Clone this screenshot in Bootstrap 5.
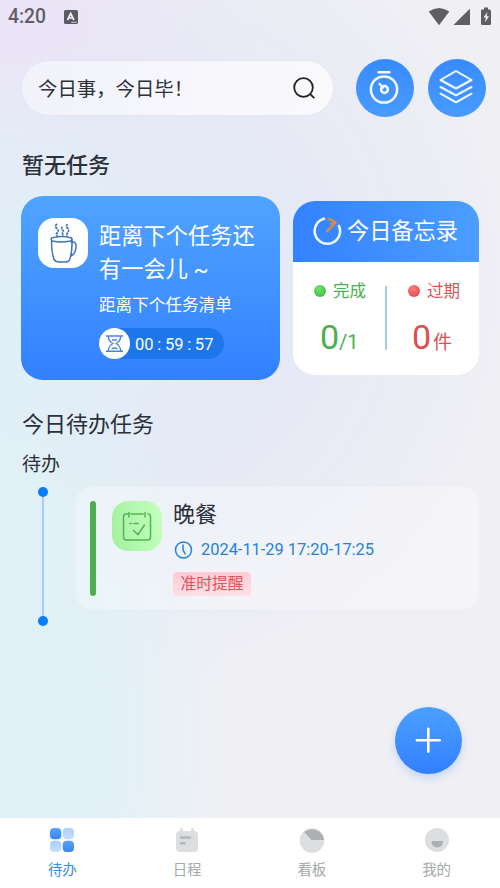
<!DOCTYPE html>
<html lang="zh-CN">
<head>
<meta charset="utf-8">
<meta name="viewport" content="width=device-width, initial-scale=1">
<title>待办</title>
<link href="https://cdn.jsdelivr.net/npm/bootstrap@5.3.0/dist/css/bootstrap.min.css" rel="stylesheet">
<style>
body{font-family:Roboto,"Noto Sans CJK SC",sans-serif;color:#2c3038}
svg{display:block;flex:none}
.screen{width:500px;height:888px;background:
 radial-gradient(ellipse 260px 130px at 0 20px,#ebe3f7 0,#ebe3f700 100%),
 radial-gradient(ellipse 230px 420px at 0 740px,#dff1f7 0,#e0f1f7dd 50%,#e2f0f700 100%),
 radial-gradient(ellipse 230px 320px at 0 330px,#e0f0f8 0,#e0eff800 100%),
 radial-gradient(ellipse 400px 420px at 130px 280px,#e4e8f6 0,#e4e8f6dd 45%,#e9eaf600 100%),
 #f0f0f4}
.status-bar{height:33px;padding:0 8px 0 8px;color:#5f5e68}
.clock-text{font-size:19.3px;font-weight:500;line-height:34px;padding-top:1px}
.top-row{padding:26px 14px 0 22px;height:84px}
.search-pill{width:311px;height:54px;padding:0 17px 0 16px;background:linear-gradient(90deg,#f2f2fc,#fafafc);box-shadow:0 0 2px #d5d9ee99;font-size:19.4px}
.search-pill span{padding-top:4px}
.round-btn{width:58px;height:58px;background:linear-gradient(#388bfd,#489bff)}
.heading-a{font-size:22px;font-weight:500;line-height:32px;margin:33px 0 14px 22px}
.cards{padding:0 21px;height:184px}
.next-card{width:259px;height:184px;border-radius:22px;background:linear-gradient(#50a4ff,#3380ff);padding:22px 16px 0 17px;gap:11px}
.mug-tile{width:50px;height:50px;border-radius:16px}
.next-title{font-size:22.2px;line-height:33px;letter-spacing:.05px;padding-top:2px}
.next-sub{font-size:16.6px;line-height:24px;margin-top:8px}
.timer{width:125px;height:31px;background:#1d76ea;margin-top:10px;font-size:16.5px}
.timer span+span{padding-top:3px;word-spacing:-.4px}
.timer-dot{width:31px;height:31px}
.memo-card{width:186px;height:174px;border-radius:22px}
.memo-head{height:61px;background:linear-gradient(90deg,#3481ff,#4b9eff);font-size:22.2px;gap:5px;padding:0 0 0 19px}
.memo-label{font-size:16.5px;line-height:24px;gap:7px}
.memo-label span{padding-top:3px}
.memo-num{font-size:34px;line-height:40px}
.memo-unit{font-size:20px}
.ball{width:12px;height:12px}
.ball-g{background:radial-gradient(circle at 40% 30%,#6fe36b,#35b63c)}
.ball-r{background:radial-gradient(circle at 40% 30%,#ff7b7b,#d93f48)}
.tx-g{color:#4caf50}.tx-r{color:#dc5050}
.memo-rule{width:2px;height:64px;background:#a2cbed;margin-top:24px}
.heading-b{font-size:22px;line-height:32px;margin:29px 0 0 22px}
.heading-c{font-size:19px;line-height:28px;margin:10px 0 0 22px}
.agenda{height:134px;margin-top:8px;padding:0 21px 0 38px}
.rail{width:10px;height:139px}
.rail-dot{width:10px;height:10px;background:#067dff}
.rail-line{width:2px;background:#a4cef3}
.task{width:403px;height:122px;border-radius:16px;background:#ffffff52;box-shadow:0 0 3px #ffffff40;padding:14px 0 0 14px}
.task-bar{width:6px;height:95px;background:#4caf50}
.task-tile{width:50px;height:50px;border-radius:16px;background:linear-gradient(80deg,#a3f19f,#c6ffc0);margin-left:16px}
.task-name{font-size:22px;line-height:26px;padding-top:1px}
.task-time{font-size:16.4px;line-height:20px;color:#2482d8;margin-top:12px;gap:8px}
.remind{width:78px;height:24px;font-size:15.8px;line-height:24px;color:#e55359;background:linear-gradient(#ffccd5,#ffdfe7);margin-top:12px;border-radius:4px}
.fab{position:absolute;left:395px;top:707px;width:67px;height:67px;background:linear-gradient(#4ba0ff,#337fff);box-shadow:0 4px 8px #3d8bff40}
.tabs{position:absolute;left:0;top:818px;width:500px;height:70px;padding-right:1px;font-size:14.5px;line-height:20px;color:#a5a9aa}
.tab-item{padding-top:9px;gap:7.500px}
.tab-on{color:#388be6}
</style>
</head>
<body>
<main class="screen position-relative overflow-hidden">
 <div class="status-bar d-flex align-items-center">
  <span class="clock-text">4:20</span>
  <svg style="margin-left:18px" width="16" height="14" viewBox="0 0 16 14"><rect width="14" height="14" rx="1.500" fill="#5b5963"/><path d="M3.500 10 6.700 3.500 9.900 10M5 8h3.500" fill="none" stroke="#f3eff9" stroke-width="1.700"/><path d="M7.500 12.400h5" stroke="#f3eff9" stroke-width="1.200" stroke-dasharray="1.200 .8"/></svg>
  <div class="d-flex ms-auto">
   <svg width="64" height="20" viewBox="0 0 64 20" fill="#5f5f61"><path d="M.7 4.500Q11 -2.500 21.300 4.500L11 18.200ZM42 2.500V18H25.500L41.300 2.200ZM53.500 2.500H56V.5h4v2h1.500Q63 2.500 63 4v12.500Q63 18 61.500 18h-7Q53 18 53 16.500V4q0-1.500.5-1.500Z"/><path d="m59.500 5-4 5.500h2.300l-.8 5 4-6.300h-2.300Z" fill="#f0f0f4"/></svg>
  </div>
 </div>
 <div class="top-row d-flex align-items-center">
  <div class="search-pill rounded-pill d-flex align-items-center justify-content-between">
   <span>今日事，今日毕！</span>
   <svg width="24" height="24" viewBox="0 0 24 24" fill="none" stroke="#1f2024" stroke-width="1.800"><circle cx="11.500" cy="11.500" r="9.300"/><path d="m17.700 17.700 4.600 4.500"/></svg>
  </div>
  <div class="round-btn rounded-circle d-flex align-items-center justify-content-center" style="margin-left:23px">
   <svg width="34" height="36" viewBox="0 0 34 36" fill="none" stroke="#f5fbff" stroke-width="2.500" stroke-linecap="round"><path d="M10.500 2.200h11M11.700 14l3.200 3.500"/><circle cx="16" cy="19.500" r="13.100"/><circle cx="16.500" cy="19.500" r="3.400"/></svg>
  </div>
  <div class="round-btn rounded-circle d-flex align-items-center justify-content-center" style="margin-left:14px">
   <svg width="36" height="36" viewBox="1 1 36 36" fill="none" stroke="#f5fbff" stroke-width="2" stroke-linejoin="round" stroke-linecap="round"><path d="m18 2 15.500 9L18 19.500 2.500 11ZM2.500 18 18 26.300 33.500 18M2.500 24.700 18 33.300l15.500-8.600"/></svg>
  </div>
 </div>
 <h1 class="heading-a">暂无任务</h1>
 <div class="cards d-flex align-items-center justify-content-between">
  <section class="next-card d-flex text-white">
   <div class="mug-tile bg-white d-flex align-items-center justify-content-center flex-shrink-0">
    <svg width="36" height="42" viewBox="0 -.5 36 42" fill="none" stroke="#3b73bd" stroke-width="1.500" stroke-linecap="round"><path d="M6.500 15.500q10-3 20 0 1 2-1 3-10 2-18 0-2-1-1-3Zm0 2.500q0 12 2.500 19 1.500 2.500 4.500 2.500h7q3 0 4.200-2.500Q27.500 29 27 16M26.500 20q4-1.500 4.500 2.500.5 8-5 11"/><path d="M12 1.500q-3 2.500 0 4.500 2.500 2.500-.5 5l1 4M17.500 4.500q-2 1.500 0 3 1.800 1.500 0 3l.5 4M22.500 1.500q-2.500 2.500.5 4.500 1.500 3-1 5v3.500" stroke-width="1.700" stroke-dasharray="2.500 .7" stroke-linecap="butt"/></svg>
   </div>
   <div class="text-nowrap">
    <div class="next-title">距离下个任务还<br>有一会儿 ~</div>
    <div class="next-sub">距离下个任务清单</div>
    <div class="timer rounded-pill d-flex align-items-center">
     <span class="timer-dot bg-white rounded-circle d-flex align-items-center justify-content-center"><svg width="19" height="19" viewBox="0 0 19 19" fill="none" stroke="#4c86cf" stroke-width="1.400"><path d="M1 2h17M1 17.300h17M3.300 2q0 5 4.500 7.500-4.500 3-4.500 7.500M15.700 2q0 5-4.500 7.500 4.500 3 4.500 7.500M6.500 15q3-2 6 0M7 6h5"/></svg></span>
     <span style="margin-left:5px">00 : 59 : 57</span>
    </div>
   </div>
  </section>
  <section class="memo-card bg-white overflow-hidden">
   <div class="memo-head d-flex align-items-center text-white text-nowrap">
    <svg width="30" height="30" viewBox="0 1 30 30" fill="none" stroke-width="2.500"><path d="M13 2.600A12.700 12.700 0 1 0 26.500 9" stroke="#f2fbff"/><path d="M15.500 2.800q4 .2 8 3.800L14.500 16" stroke="#dc8b3c"/><path d="M18 7.800l5-1" stroke="#dc8b3c" stroke-width="1.800"/></svg>
    <span>今日备忘录</span>
   </div>
   <div class="d-flex">
    <div class="tx-g" style="width:92px;padding:15px 0 0 21px">
     <div class="memo-label d-flex align-items-center"><i class="ball ball-g rounded-circle"></i><span>完成</span></div>
     <div class="memo-num text-nowrap" style="margin:13px 0 0 6px">0<span class="memo-unit">/1</span></div>
    </div>
    <div class="memo-rule"></div>
    <div class="tx-r" style="width:92px;padding:15px 0 0 21px">
     <div class="memo-label d-flex align-items-center"><i class="ball ball-r rounded-circle"></i><span>过期</span></div>
     <div class="memo-num text-nowrap" style="margin:13px 0 0 4px">0<span class="memo-unit" style="margin-left:2px;font-size:19px">件</span></div>
    </div>
   </div>
  </section>
 </div>
 <h2 class="heading-b fw-normal">今日待办任务</h2>
 <h3 class="heading-c fw-normal">待办</h3>
 <div class="agenda d-flex justify-content-between align-items-start">
  <div class="rail d-flex flex-column align-items-center"><i class="rail-dot rounded-circle"></i><i class="rail-line flex-grow-1"></i><i class="rail-dot rounded-circle"></i></div>
  <article class="task d-flex align-items-start">
   <div class="task-bar rounded-pill"></div>
   <div class="task-tile d-flex align-items-center justify-content-center"><svg width="30" height="30" viewBox="0 0 30 30" fill="none" stroke="#53b454" stroke-width="1.500" stroke-linecap="round"><path d="M7 3H4q-2.500 0-2.500 3v20q0 3 3 3h21q3 0 3-3V6q0-3-2.500-3M9 3h12M7 1.500V6M23 1.500V6M8 12.500h1.500M12 12.500h4M11.500 19.500l4.500 4L22.500 14"/></svg></div>
   <div style="margin-left:11px">
    <div class="task-name">晚餐</div>
    <div class="task-time d-flex align-items-center"><svg width="20" height="20" viewBox="0 0 20 20" fill="none" stroke="#2482d8" stroke-width="1.500"><circle cx="10.500" cy="10" r="8"/><path d="M10 4.500V10l2.500 4.500"/></svg>2024-11-29 17:20-17:25</div>
    <div class="remind text-center">准时提醒</div>
   </div>
  </article>
 </div>
 <button class="fab btn border-0 p-0 rounded-circle d-flex align-items-center justify-content-center" aria-label="添加"><svg width="27" height="27" viewBox="0 0 27 27" stroke="#fff" stroke-width="2.600" stroke-linecap="round"><path d="M13.300 1.800v22.800M1.900 13.200h22.800"/></svg></button>
 <nav class="tabs bg-white d-flex">
  <div class="tab-item tab-on col-3 d-flex flex-column align-items-center"><svg width="26" height="26" viewBox="0 0 26 26"><defs><linearGradient id="b" x2="0" y2="1"><stop stop-color="#5aa3fb"/><stop offset="1" stop-color="#3985ef"/></linearGradient><linearGradient id="l" x2="0" y2="1"><stop stop-color="#abcef9"/><stop offset="1" stop-color="#c8dffb"/></linearGradient></defs><rect x="1" y="1" width="11.300" height="11.300" rx="4" fill="url(#b)"/><rect x="13.700" y="1" width="11.300" height="11.300" rx="4" fill="url(#l)"/><rect x="1" y="13.700" width="11.300" height="11.300" rx="4" fill="url(#l)"/><rect x="13.700" y="13.700" width="11.300" height="11.300" rx="4" fill="url(#b)"/></svg>待办</div>
  <div class="tab-item col-3 d-flex flex-column align-items-center"><svg width="26" height="26" viewBox="0 0 26 26"><rect x="2" y="4" width="22" height="21" rx="4" fill="#dcdee0"/><path d="M7.500 2.500V6M18.500 2.500V6" stroke="#dcdee0" stroke-width="3" stroke-linecap="round"/><path d="M7 10.500h9M7 16.300h3.500" stroke="#b4b7ba" stroke-width="2.600" stroke-linecap="round"/></svg>日程</div>
  <div class="tab-item col-3 d-flex flex-column align-items-center"><svg width="26" height="26" viewBox="0 0 26 26"><circle cx="13" cy="13.500" r="12.300" fill="#dcdee0"/><path d="M12.500 13 5.200 5A12.300 12.300 0 0 1 25 13Z" fill="#acb0b3"/></svg>看板</div>
  <div class="tab-item col-3 d-flex flex-column align-items-center"><svg width="26" height="26" viewBox="0 0 26 26"><circle cx="13" cy="13" r="12" fill="#dcdee0"/><path d="M7.500 14H19q0 6.500-5.700 6.500T7.500 14Z" fill="#acb0b3"/></svg>我的</div>
 </nav>
</main>
<script src="https://cdn.jsdelivr.net/npm/bootstrap@5.3.0/dist/js/bootstrap.bundle.min.js"></script>
</body>
</html>
